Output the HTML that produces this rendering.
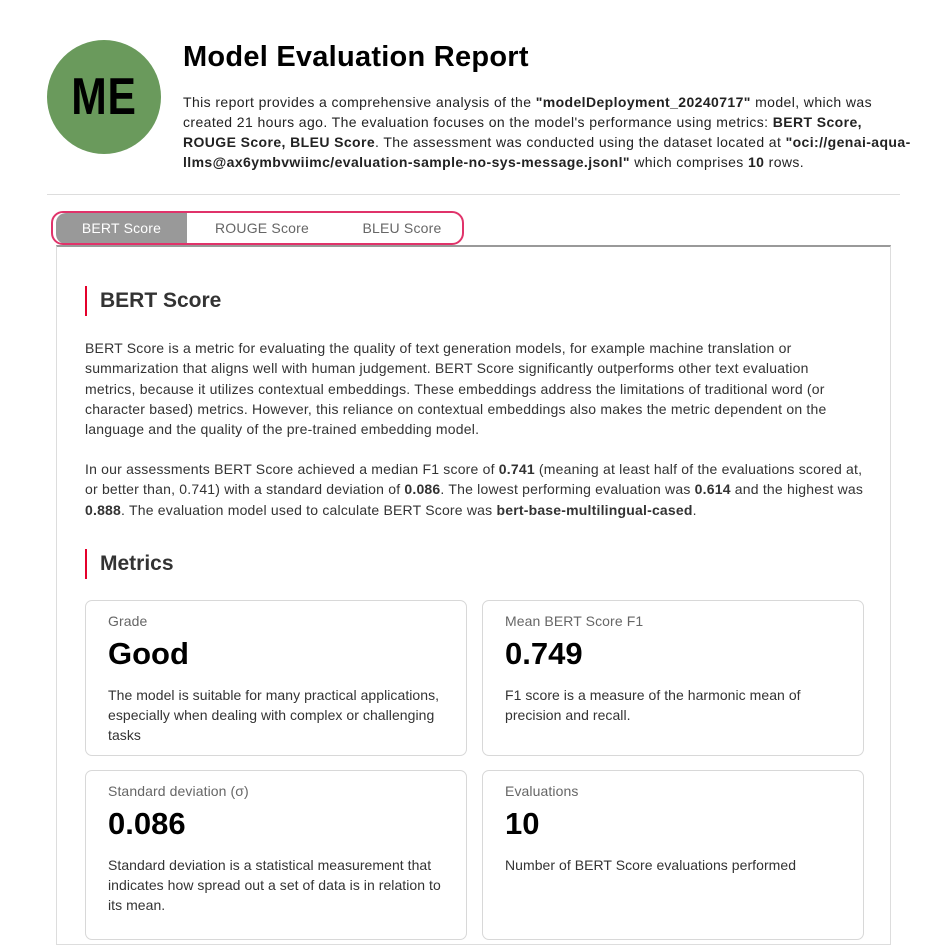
<!DOCTYPE html>
<html><head><meta charset="utf-8"><style>
*{box-sizing:border-box;margin:0;padding:0}
body{width:947px;height:914px;overflow:hidden;background:#fff;font-family:"Liberation Sans",Arial,sans-serif;color:#222;position:relative}
.av{position:absolute;left:47px;top:40px;width:114px;height:114px;border-radius:50%;background:#6a9a5c;display:flex;align-items:center;justify-content:center}
.av span{font-size:52px;font-weight:bold;color:#000;display:inline-block;transform:scaleX(0.82);letter-spacing:1px}
h1{position:absolute;left:183px;top:41px;font-size:29px;font-weight:bold;color:#000;letter-spacing:0.25px}
.intro{position:absolute;left:183px;top:92px;width:732px;font-size:14px;line-height:20px;color:#222;letter-spacing:0.4px}
.hr{position:absolute;left:47px;top:194px;width:853px;height:1px;background:#ddd}
.tabs{position:absolute;left:51px;top:211px;width:413px;height:34px;border:2px solid #e0336a;border-radius:12px;}
.tab{position:absolute;top:213px;height:31px;font-size:14px;color:#666;line-height:31px;text-align:center;letter-spacing:0.2px}
.panel{position:absolute;left:56px;top:245px;width:835px;height:700px;border:1px solid #ddd;border-top:2px solid #999}
h2{position:absolute;font-size:21px;font-weight:bold;color:#333;padding-left:13px;border-left:2px solid #e4002b;line-height:30px}
.p{position:absolute;left:85px;font-size:14px;line-height:20.3px;color:#333;letter-spacing:0.2px}
.card{position:absolute;width:382px;border:1px solid #d8d8d8;border-radius:7px;padding:12px 22px}
.card .l{font-size:14px;color:#666;line-height:16px;letter-spacing:0.1px}
.card .v{font-size:31px;font-weight:bold;color:#000;margin-top:8px;line-height:34px}
.card .d{font-size:14px;color:#333;line-height:20px;margin-top:14px;letter-spacing:0.05px}
</style></head><body>
<div class="av"><span>ME</span></div>
<h1>Model Evaluation Report</h1>
<div class="intro">This report provides a comprehensive analysis of the <b>"modelDeployment_20240717"</b> model, which was created 21 hours ago. The evaluation focuses on the model's performance using metrics: <b>BERT Score, ROUGE Score, BLEU Score</b>. The assessment was conducted using the dataset located at <b>"oci://genai-aqua-llms@ax6ymbvwiimc/evaluation-sample-no-sys-message.jsonl"</b> which comprises <b>10</b> rows.</div>
<div class="hr"></div>
<div class="tab" style="left:56px;width:131px;background:#999;color:#fff;border-radius:10px 0 0 10px">BERT Score</div>
<div class="tab" style="left:192px;width:140px">ROUGE Score</div>
<div class="tab" style="left:332px;width:140px">BLEU Score</div>
<div class="tabs"></div>
<div class="panel"></div>
<h2 style="left:85px;top:286px">BERT Score</h2>
<div class="p" style="top:338px;width:772px">BERT Score is a metric for evaluating the quality of text generation models, for example machine translation or summarization that aligns well with human judgement. BERT Score significantly outperforms other text evaluation metrics, because it utilizes contextual embeddings. These embeddings address the limitations of traditional word (or character based) metrics. However, this reliance on contextual embeddings also makes the metric dependent on the language and the quality of the pre-trained embedding model.</div>
<div class="p" style="top:459px;width:790px">In our assessments BERT Score achieved a median F1 score of <b>0.741</b> (meaning at least half of the evaluations scored at, or better than, 0.741) with a standard deviation of <b>0.086</b>. The lowest performing evaluation was <b>0.614</b> and the highest was <b>0.888</b>. The evaluation model used to calculate BERT Score was <b>bert-base-multilingual-cased</b>.</div>
<h2 style="left:85px;top:549px">Metrics</h2>
<div class="card" style="left:85px;top:600px;height:156px"><div class="l">Grade</div><div class="v">Good</div><div class="d">The model is suitable for many practical applications, especially when dealing with complex or challenging tasks</div></div>
<div class="card" style="left:482px;top:600px;height:156px"><div class="l">Mean BERT Score F1</div><div class="v">0.749</div><div class="d">F1 score is a measure of the harmonic mean of precision and recall.</div></div>
<div class="card" style="left:85px;top:770px;height:170px"><div class="l">Standard deviation (σ)</div><div class="v">0.086</div><div class="d">Standard deviation is a statistical measurement that indicates how spread out a set of data is in relation to its mean.</div></div>
<div class="card" style="left:482px;top:770px;height:170px"><div class="l">Evaluations</div><div class="v">10</div><div class="d">Number of BERT Score evaluations performed</div></div>
</body></html>
